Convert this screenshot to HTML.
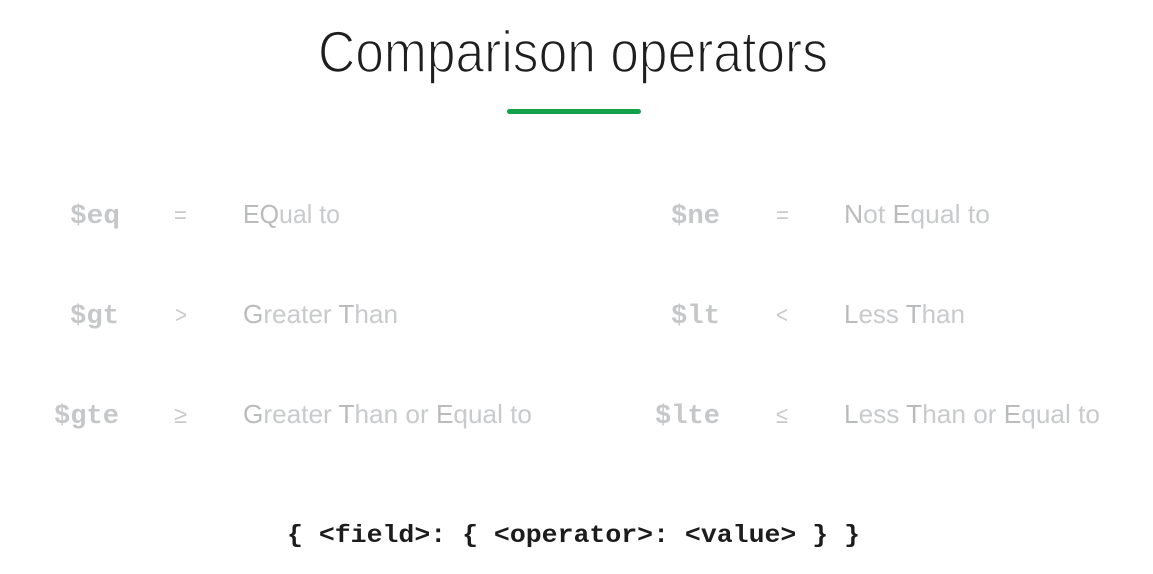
<!DOCTYPE html>
<html><head><meta charset="utf-8"><style>
html,body{margin:0;padding:0;background:#fff;width:1153px;height:574px;overflow:hidden}
svg{display:block}
.m{font-family:"Liberation Mono",monospace;font-weight:bold;font-size:27px;fill:#c5c7c9}
.s{font-family:"Liberation Sans",sans-serif;font-size:26px;fill:#c8cacc}
.d{fill:#b9bbbd}
.o{font-family:"Liberation Sans",sans-serif;font-size:24px;fill:#c8cacc}
</style></head><body>
<svg width="1153" height="574" viewBox="0 0 1153 574" xmlns="http://www.w3.org/2000/svg">
<text x="318" y="72" textLength="510" lengthAdjust="spacingAndGlyphs" style="font-family:'Liberation Sans',sans-serif;font-size:58px;fill:#1e1e1e;stroke:#fff;stroke-width:1.6px">Comparison operators</text>
<rect x="507" y="109" width="134" height="5" rx="2.5" fill="#14a04a"/>

<text class="m" x="70" y="223" textLength="50" lengthAdjust="spacingAndGlyphs">$eq</text>
<text class="o" x="174" y="223" textLength="13" lengthAdjust="spacingAndGlyphs">=</text>
<text class="s" x="243" y="223" textLength="97" lengthAdjust="spacingAndGlyphs"><tspan class="d">EQ</tspan>ual to</text>

<text class="m" x="671" y="223" textLength="49" lengthAdjust="spacingAndGlyphs">$ne</text>
<text class="o" x="776" y="223" textLength="13" lengthAdjust="spacingAndGlyphs">=</text>
<text class="s" x="844" y="223" textLength="146" lengthAdjust="spacingAndGlyphs"><tspan class="d">N</tspan>ot <tspan class="d">E</tspan>qual to</text>

<text class="m" x="70" y="323" textLength="49" lengthAdjust="spacingAndGlyphs">$gt</text>
<text class="o" x="175" y="323" textLength="12" lengthAdjust="spacingAndGlyphs">&gt;</text>
<text class="s" x="243" y="323" textLength="155" lengthAdjust="spacingAndGlyphs"><tspan class="d">G</tspan>reater <tspan class="d">T</tspan>han</text>

<text class="m" x="671" y="323" textLength="49" lengthAdjust="spacingAndGlyphs">$lt</text>
<text class="o" x="776" y="323" textLength="12" lengthAdjust="spacingAndGlyphs">&lt;</text>
<text class="s" x="844" y="323" textLength="121" lengthAdjust="spacingAndGlyphs"><tspan class="d">L</tspan>ess <tspan class="d">T</tspan>han</text>

<text class="m" x="54" y="423" textLength="65" lengthAdjust="spacingAndGlyphs">$gte</text>
<text class="o" x="174" y="423" textLength="13" lengthAdjust="spacingAndGlyphs">≥</text>
<text class="s" x="243" y="423" textLength="289" lengthAdjust="spacingAndGlyphs"><tspan class="d">G</tspan>reater <tspan class="d">T</tspan>han or <tspan class="d">E</tspan>qual to</text>

<text class="m" x="655" y="423" textLength="65" lengthAdjust="spacingAndGlyphs">$lte</text>
<text class="o" x="776" y="423" textLength="12" lengthAdjust="spacingAndGlyphs">≤</text>
<text class="s" x="844" y="423" textLength="256" lengthAdjust="spacingAndGlyphs"><tspan class="d">L</tspan>ess <tspan class="d">T</tspan>han or <tspan class="d">E</tspan>qual to</text>

<text x="287" y="542" textLength="573" lengthAdjust="spacingAndGlyphs" style="font-family:'Liberation Mono',monospace;font-weight:bold;font-size:25px;fill:#1c1c1c">{ &lt;field&gt;: { &lt;operator&gt;: &lt;value&gt; } }</text>
</svg>
</body></html>
